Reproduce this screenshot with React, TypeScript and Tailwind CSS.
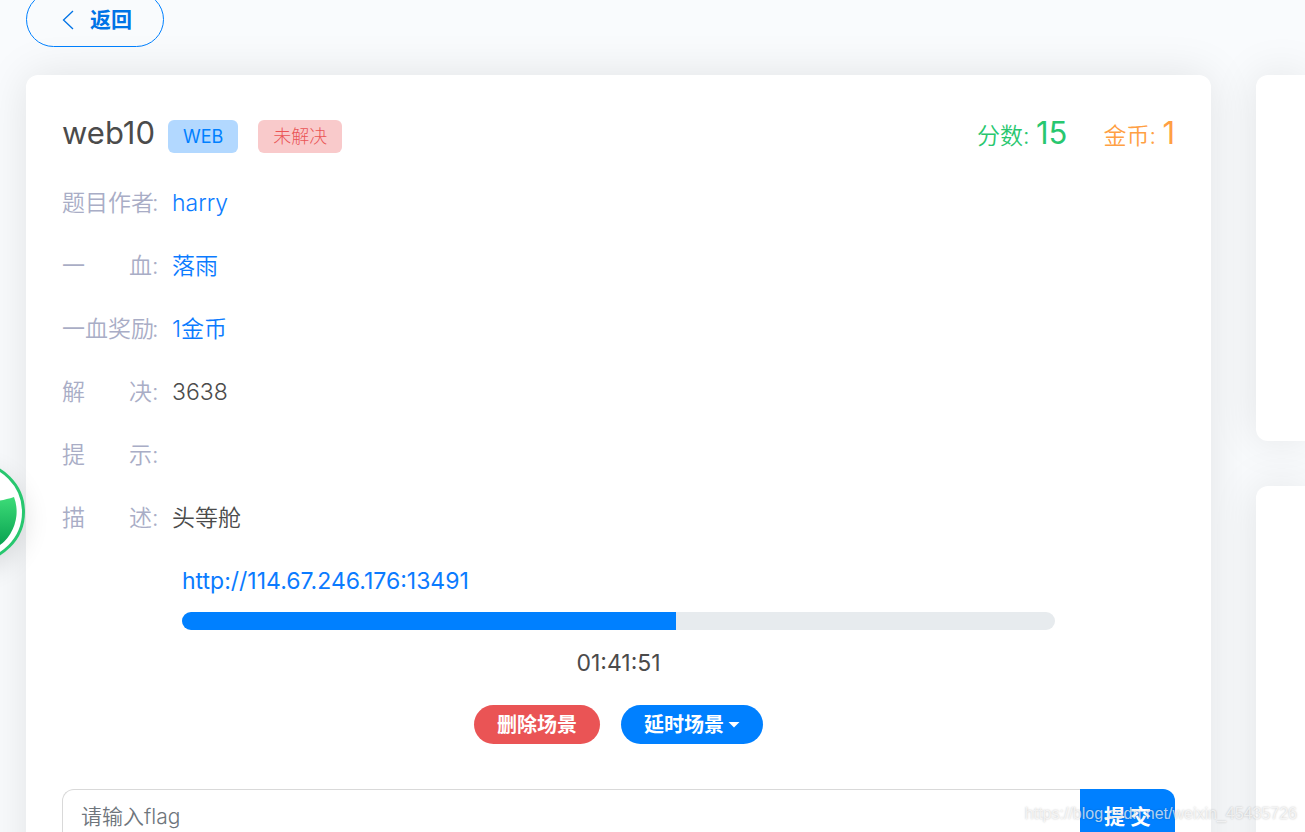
import React from "react";

type Detail = {
  label: string;
  value?: string;
  link?: boolean;
};

const details: Detail[] = [
  { label: "题目作者", value: "harry", link: true },
  { label: "一血", value: "落雨", link: true },
  { label: "一血奖励", value: "1金币", link: true },
  { label: "解决", value: "3638" },
  { label: "提示" },
  { label: "描述", value: "头等舱" },
];

const progress = 56.6;

function DetailRow({ label, value, link }: Detail) {
  return (
    <div className="flex">
      <dt className="flex w-[110px] shrink-0 text-[#a9adc6]">
        <span className="flex w-[90px] justify-between">
          {label.split("").map((char) => (
            <span key={char}>{char}</span>
          ))}
        </span>
        <span>:</span>
      </dt>
      <dd>
        {link ? (
          <a href="#" className="text-[#0b7bff]">
            {value}
          </a>
        ) : (
          value
        )}
      </dd>
    </div>
  );
}

function FloatingGauge() {
  return (
    <div className="absolute -left-[75px] top-[462px] h-[100px] w-[100px] rounded-full shadow-[0_8px_26px_rgba(0,0,0,0.12)]">
      <svg viewBox="0 0 100 100" className="block h-full w-full" aria-hidden="true">
        <defs>
          <linearGradient id="wave" x1="0" y1="0" x2="0" y2="1">
            <stop offset="0" stopColor="#3ddc78" />
            <stop offset="1" stopColor="#00984a" />
          </linearGradient>
        </defs>
        <circle cx="50" cy="50" r="48.5" fill="#fff" stroke="#28c76f" strokeWidth="3" />
        <path d="M8 44 C30 30 50 48 89 35 A42 42 0 1 1 8 44 Z" fill="url(#wave)" />
      </svg>
    </div>
  );
}

export default function App() {
  return (
    <div className="relative h-screen overflow-hidden bg-[#f9fbfd] font-['Inter','Noto_Sans_CJK_SC',sans-serif] text-[23px] font-[350] leading-[35px] text-[#4b4b4b]">
      <div className="pl-[26px]">
        <button
          type="button"
          className="-mt-2 flex h-[55px] w-[138px] items-center rounded-full border border-[#0080ff] pl-[35px] text-[21px] font-bold text-[#0073e6]"
        >
          <svg viewBox="0 0 12 20" className="mr-4 h-5 w-3" fill="none" stroke="currentColor" strokeWidth="1.3" aria-hidden="true">
            <path d="M11 1 L1.5 10 L11 19" />
          </svg>
          返回
        </button>

        <div className="mt-7 flex items-start gap-[45px]">
          <main className="min-w-0 flex-1 rounded-xl bg-white px-9 pb-16 pt-9 shadow-[0_0_45px_rgba(0,0,0,0.1)]">
            <header className="flex items-start justify-between">
              <div className="flex items-start">
                <h1 className="text-[31px] font-normal leading-[43px]">web10</h1>
                <span className="ml-[13px] mt-[9px] rounded-md bg-[#b2d8ff] px-[15px] text-lg font-normal leading-[33px] text-[#0080ff]">
                  WEB
                </span>
                <span className="ml-5 mt-[9px] rounded-md bg-[#f9cacb] px-[15px] text-lg font-light leading-[33px] text-[#ea5455]">
                  未解决
                </span>
              </div>
              <div className="flex gap-9 leading-[43px]">
                <p className="text-[#28c76f]">
                  分数: <span className="text-[31px] font-normal">15</span>
                </p>
                <p className="text-[#ff9f43]">
                  金币: <span className="text-[31px] font-normal">1</span>
                </p>
              </div>
            </header>

            <dl className="mt-7 flex flex-col gap-7">
              {details.map((detail) => (
                <DetailRow key={detail.label} {...detail} />
              ))}
            </dl>

            <section className="mx-[120px] mt-7">
              <a href="http://114.67.246.176:13491" className="block font-normal text-[#0b7bff]">
                http://114.67.246.176:13491
              </a>
              <div
                role="progressbar"
                aria-valuenow={progress}
                aria-valuemin={0}
                aria-valuemax={100}
                aria-label="01:41:51"
                className="mt-[13px] h-[18px] overflow-hidden rounded-full bg-[#e7ebee]"
              >
                <div className="h-full bg-[#0080ff]" style={{ width: `${progress}%` }} />
              </div>
              <p className="mt-4 text-center font-normal">01:41:51</p>
              <div className="mt-6 flex justify-center gap-[21px] text-xl font-bold text-white">
                <button type="button" className="h-[39px] rounded-full bg-[#ea5455] px-[23px]">
                  删除场景
                </button>
                <button type="button" className="flex h-[39px] items-center gap-1 rounded-full bg-[#0080ff] px-[23px]">
                  延时场景
                  <svg viewBox="0 0 12 6" className="h-1.5 w-3" fill="currentColor" aria-hidden="true">
                    <path d="M0.5 0 H11.5 L6 5.5 Z" />
                  </svg>
                </button>
              </div>
            </section>

            <form className="mt-[45px] flex h-[55px]" onSubmit={(event) => event.preventDefault()}>
              <input
                type="text"
                aria-label="请输入flag"
                placeholder="请输入flag"
                className="min-w-0 flex-1 rounded-l-xl border border-r-0 border-[#d9d9d9] px-[18px] text-[21px] outline-none placeholder:text-[#6e757c]"
              />
              <button type="submit" className="w-[95px] rounded-r-xl bg-[#0080ff] text-[21px] font-bold text-white">
                提 交
              </button>
            </form>
          </main>

          <aside className="flex w-[49px] shrink-0 flex-col gap-[45px]">
            <div className="h-[366px] rounded-l-xl bg-white shadow-[0_0_45px_rgba(0,0,0,0.1)]" />
            <div className="h-[400px] rounded-l-xl bg-white shadow-[0_0_45px_rgba(0,0,0,0.1)]" />
          </aside>
        </div>
      </div>

      <FloatingGauge />

      <p className="pointer-events-none absolute bottom-2 right-2 font-['Liberation_Sans',sans-serif] text-base font-normal leading-5 text-white/70 [text-shadow:0_0_2px_rgba(0,0,0,0.25)]">
        https://blog.csdn.net/weixin_45435726
      </p>
    </div>
  );
}
